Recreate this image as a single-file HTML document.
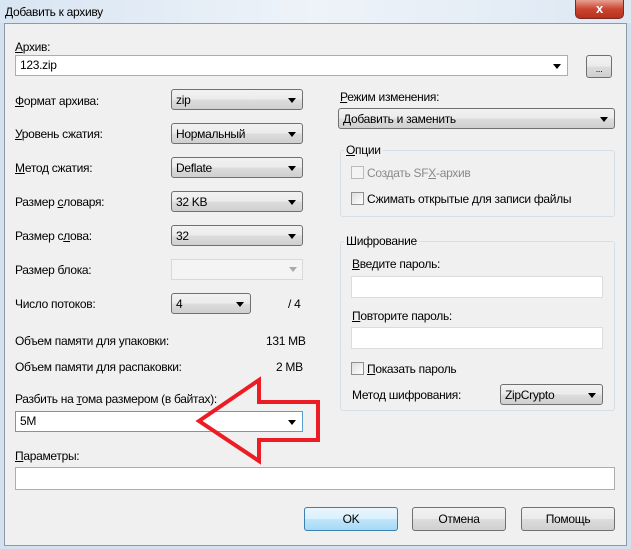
<!DOCTYPE html>
<html><head><meta charset="utf-8"><style>
*{box-sizing:border-box;margin:0;padding:0}
body{width:631px;height:549px;overflow:hidden;background:#d3e0ee;font-family:"Liberation Sans",sans-serif;font-size:12px;color:#000;position:relative;letter-spacing:-0.3px}
.a{position:absolute;white-space:nowrap;line-height:14px}
.title{position:absolute;left:0;top:0;width:631px;height:23px;background:linear-gradient(90deg,#d8e5f2,#eef3f9 50%,#dde8f3)}
.close{position:absolute;left:575px;top:0;width:49px;height:19px;border:1px solid #7a2a20;border-top:none;border-radius:0 0 5px 5px;background:linear-gradient(#e8a092,#c9462f 50%,#b8301c);color:#fff;font-weight:bold;text-align:center;font-size:13px;line-height:17px}
.panel{position:absolute;left:4px;top:23px;width:623px;height:523px;background:#f0f0f0;border:1px solid #8d9aa8}
.cb{position:absolute;height:21px;border:1px solid #707070;border-radius:3px;background:linear-gradient(#f2f2f2,#ebebeb 50%,#dddddd 51%,#cfcfcf);padding-left:4px;line-height:21px}
.cb:after{content:"";position:absolute;right:6px;top:8px;border:4px solid transparent;border-top:5px solid #000;border-bottom:none}
.in{position:absolute;height:21px;border:1px solid #abadb3;background:#fff;padding-left:4px;line-height:19px}
.in.dd:after{content:"";position:absolute;right:6px;top:8px;border:4px solid transparent;border-top:5px solid #000;border-bottom:none}
.grp{position:absolute;border:1px solid #d5dfe5;border-radius:3px}
.chk{position:absolute;width:13px;height:13px;border:1px solid #8f8f8f;background:linear-gradient(135deg,#ddd,#fff)}
.btn{position:absolute;height:24px;border:1px solid #707070;border-radius:3px;background:linear-gradient(#f2f2f2,#ebebeb 50%,#dddddd 51%,#cfcfcf);text-align:center;line-height:22px}
u{text-decoration:underline}
</style></head><body>
<div class="title"></div>
<div class="a" style="left:5px;top:5px;font-size:12px">Добавить к архиву</div>
<div class="close">x</div>
<div class="panel"></div>

<div class="a" style="left:15px;top:40px"><u>А</u>рхив:</div>
<div class="in dd" style="left:15px;top:55px;width:553px">123.zip</div>
<div class="btn" style="left:586px;top:55px;width:26px;height:23px;line-height:26px;font-size:9px">...</div>

<div class="a" style="left:15px;top:94px"><u>Ф</u>ормат архива:</div>
<div class="cb" style="left:171px;top:89px;width:132px">zip</div>
<div class="a" style="left:15px;top:127px"><u>У</u>ровень сжатия:</div>
<div class="cb" style="left:171px;top:123px;width:132px">Нормальный</div>
<div class="a" style="left:15px;top:161px"><u>М</u>етод сжатия:</div>
<div class="cb" style="left:171px;top:157px;width:132px">Deflate</div>
<div class="a" style="left:15px;top:195px">Размер <u>с</u>ловаря:</div>
<div class="cb" style="left:171px;top:191px;width:132px">32 KB</div>
<div class="a" style="left:15px;top:229px">Размер с<u>л</u>ова:</div>
<div class="cb" style="left:171px;top:225px;width:132px">32</div>
<div class="a" style="left:15px;top:263px">Размер блока:</div>
<div class="in" style="left:171px;top:259px;width:132px;border-color:#d9d9d9;background:#f4f4f4"></div>
<div style="position:absolute;left:289px;top:267px;border:4px solid transparent;border-top:5px solid #aaa"></div>
<div class="a" style="left:15px;top:297px">Число потоков:</div>
<div class="cb" style="left:171px;top:293px;width:80px">4</div>
<div class="a" style="left:288px;top:297px">/ 4</div>
<div class="a" style="left:15px;top:334px">Объем памяти для упаковки:</div>
<div class="a" style="left:266px;top:334px">131 MB</div>
<div class="a" style="left:15px;top:360px">Объем памяти для распаковки:</div>
<div class="a" style="left:276px;top:360px">2 MB</div>
<div class="a" style="left:15px;top:392px">Разбить на <u>т</u>ома размером (в байтах):</div>
<div class="in dd" style="left:15px;top:411px;width:288px;border-color:#5a9fd4">5M</div>
<div class="a" style="left:15px;top:449px"><u>П</u>араметры:</div>
<div class="in" style="left:15px;top:467px;width:600px;height:23px"></div>

<div class="a" style="left:340px;top:90px"><u>Р</u>ежим изменения:</div>
<div class="cb" style="left:338px;top:108px;width:277px">Добавить и заменить</div>
<div class="grp" style="left:340px;top:150px;width:275px;height:67px"></div>
<div class="a" style="left:344px;top:143px;background:#f0f0f0;padding:0 2px"><u>О</u>пции</div>
<div class="chk" style="left:351px;top:166px;border-color:#bbb;background:#f4f4f4"></div>
<div class="a" style="left:367px;top:166px;color:#8a8a8a">Создать SF<u>X</u>-архив</div>
<div class="chk" style="left:351px;top:192px"></div>
<div class="a" style="left:367px;top:192px">Сжимать открытые для записи файлы</div>
<div class="grp" style="left:340px;top:241px;width:275px;height:170px"></div>
<div class="a" style="left:344px;top:234px;background:#f0f0f0;padding:0 2px">Шифрование</div>
<div class="a" style="left:352px;top:257px"><u>В</u>ведите пароль:</div>
<div class="in" style="left:351px;top:276px;width:252px;height:22px;border-color:#dcdcdc"></div>
<div class="a" style="left:352px;top:309px"><u>П</u>овторите пароль:</div>
<div class="in" style="left:351px;top:327px;width:252px;height:22px;border-color:#dcdcdc"></div>
<div class="chk" style="left:351px;top:362px"></div>
<div class="a" style="left:367px;top:362px"><u>П</u>оказать пароль</div>
<div class="a" style="left:352px;top:388px">Метод шифрования:</div>
<div class="cb" style="left:500px;top:384px;width:103px">ZipCrypto</div>

<div class="btn" style="left:304px;top:507px;width:94px;border-color:#3c7fb1;background:linear-gradient(#eaf6fd,#d9f0fc 50%,#bee6fd 51%,#a7d9f5)">OK</div>
<div class="btn" style="left:412px;top:507px;width:94px">Отмена</div>
<div class="btn" style="left:521px;top:507px;width:94px">Помощь</div>

<svg style="position:absolute;left:0;top:0" width="631" height="549"><polygon points="199,421 259,380 259,402 318,402 318,440 259,440 259,461" fill="none" stroke="#ed1c24" stroke-width="4" stroke-linejoin="miter"/></svg>
</body></html>
